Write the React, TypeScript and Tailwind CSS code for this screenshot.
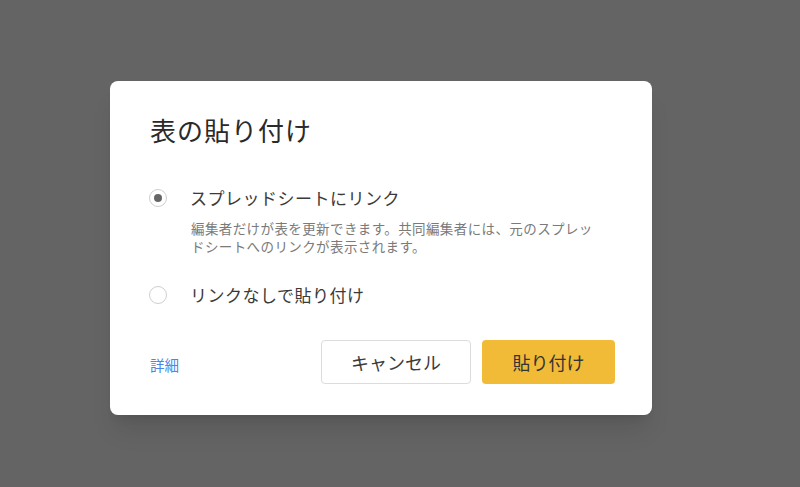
export default function App() {
  return (
    <div
      className="w-[800px] h-[487px] bg-[#646464] overflow-hidden"
      style={{ fontFamily: '"Noto Sans CJK JP", "Noto Sans", sans-serif' }}
    >
      <div className="ml-[110px] mt-[81px] w-[542px] h-[334px] bg-white rounded-lg shadow-xl pl-10 pr-[37px] pt-[32px]">
        <h1 className="text-[26px] leading-[34px] tracking-[1px] text-[#2a2a2a]">表の貼り付け</h1>

        <div className="mt-[39px] flex items-center">
          <span className="w-[18px] h-[18px] rounded-full border border-[#cfcfcf] flex items-center justify-center ml-[-1px]">
            <span className="w-2 h-2 rounded-full bg-[#666]" />
          </span>
          <span className="ml-[23px] text-[17px] tracking-[0.5px] leading-6 text-[#3a3a3a]">スプレッドシートにリンク</span>
        </div>
        <p className="mt-[9px] ml-[41px] w-[408px] text-[13.5px] tracking-[0.4px] leading-[18px] text-[#7a7a7a]">
          編集者だけが表を更新できます。共同編集者には、元のスプレッドシートへのリンクが表示されます。
        </p>

        <div className="mt-[28px] flex items-center">
          <span className="w-[18px] h-[18px] rounded-full border border-[#cfcfcf] ml-[-1px]" />
          <span className="ml-[23px] text-[17px] tracking-[0.5px] leading-6 text-[#3a3a3a]">リンクなしで貼り付け</span>
        </div>

        <div className="mt-[33px] flex items-center">
          <a className="text-[14.5px] text-[#4a86e8] mt-[6px]">詳細</a>
          <div className="ml-auto flex gap-[11px]">
            <button className="w-[150px] h-[44px] rounded border border-[#dcdcdc] bg-white text-[18px] text-[#3c3c3c]">
              キャンセル
            </button>
            <button className="w-[133px] h-[44px] rounded bg-[#f1bb38] text-[18px] text-[#333]">
              貼り付け
            </button>
          </div>
        </div>
      </div>
    </div>
  );
}
